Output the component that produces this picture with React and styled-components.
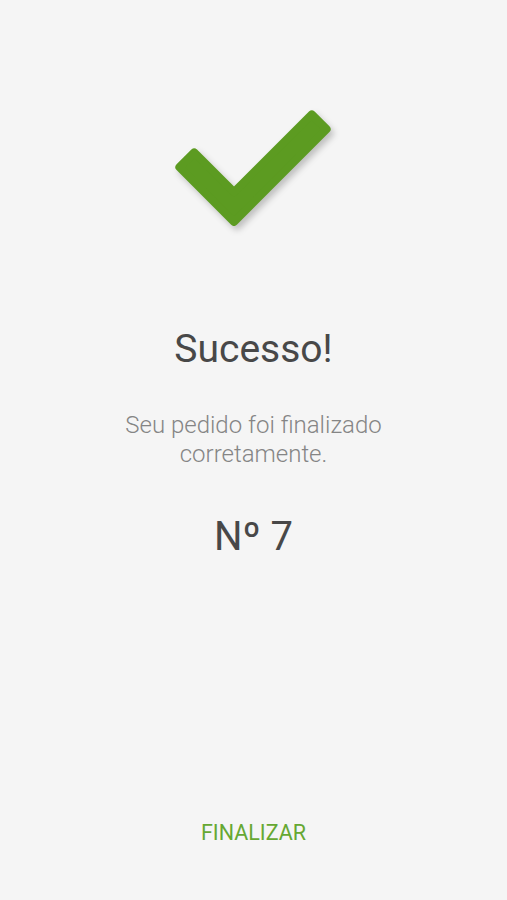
import React from 'react';
import styled, { createGlobalStyle } from 'styled-components';

const GlobalStyle = createGlobalStyle`
    html, body {
        margin: 0;
        padding: 0;
        background: #f5f5f5;
    }
    * {
        box-sizing: border-box;
    }
`

const Container = styled.div`
    min-height: 100vh;
    display: flex;
    flex-direction: column;
    align-items: center;
    padding: 100px 20px 44px;
    font-family: Roboto, "Noto Sans", sans-serif;
    text-align: center;
`
const Check = styled.svg`
    display: block;
    filter: drop-shadow(3px 4px 3px rgba(0, 0, 0, 0.22));
`
const Title = styled.h1`
    margin: 86px 0 0;
    font-size: 39px;
    line-height: 46px;
    font-weight: 400;
    color: #484848;
`
const Message = styled.p`
    margin: 39px 0 0;
    font-size: 24px;
    line-height: 29px;
    font-weight: 300;
    color: #858585;
`
const OrderNumber = styled.h2`
    margin: 44px 0 0;
    font-size: 40px;
    line-height: 48px;
    font-weight: 400;
    color: #484848;
`
const Button = styled.button`
    margin-top: auto;
    height: 48px;
    padding: 0 16px;
    border: none;
    background: transparent;
    font-family: Roboto, "Noto Sans", sans-serif;
    font-size: 21.5px;
    font-weight: 400;
    color: #66a832;
    cursor: pointer;
`

const CheckIcon = () => (
    <Check width="180" height="140" viewBox="165 100 180 140">
        <polygon
            points="235,221.85 180.4,167.2 195.2,152.4 235,192.15 312.8,114.4 327.6,129.2"
            fill="#5c9b21"
            stroke="#5c9b21"
            strokeWidth="8"
            strokeLinejoin="round"
        />
    </Check>
);

const App = () => {
    return (
        <Container>
            <GlobalStyle />
            <CheckIcon />
            <Title>Sucesso!</Title>
            <Message>Seu pedido foi finalizado<br />corretamente.</Message>
            <OrderNumber>Nº 7</OrderNumber>
            <Button>FINALIZAR</Button>
        </Container>
    );
};

export default App;
